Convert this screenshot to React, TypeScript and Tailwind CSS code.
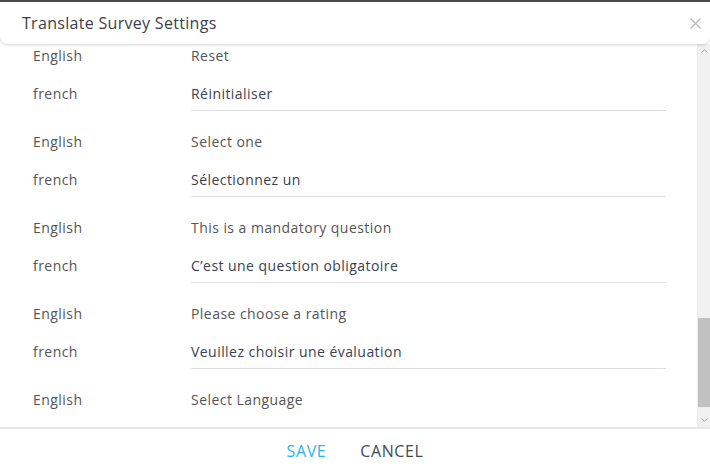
import React from "react";

const groups = [
  { en: "Reset", fr: "Réinitialiser" },
  { en: "Select one", fr: "Sélectionnez un" },
  { en: "This is a mandatory question", fr: "C’est une question obligatoire" },
  { en: "Please choose a rating", fr: "Veuillez choisir une évaluation" },
  { en: "Select Language", fr: null as string | null },
];

export default function App() {
  return (
    <div
      className="w-[710px] h-[472px] bg-white flex flex-col overflow-hidden relative"
      style={{ fontFamily: "'Open Sans', sans-serif" }}
    >
      <div className="h-[2px] bg-[#4a4a4a] shrink-0" />
      <div className="relative z-10 h-[42px] shrink-0 bg-white rounded-b-[8px] shadow-[0_1px_3px_rgba(0,0,0,0.18)] flex items-center justify-between pl-[22px] pr-[9px]">
        <span className="text-[16px] tracking-[0.3px] text-[#3d4049]">Translate Survey Settings</span>
        <svg width="11" height="11" viewBox="0 0 11 11">
          <path d="M0.5 0.5 L10.5 10.5 M10.5 0.5 L0.5 10.5" stroke="#b8b8b8" strokeWidth="1.1" />
        </svg>
      </div>
      <div className="flex-1 flex min-h-0">
        <div className="flex-1 overflow-hidden pl-[33px] pr-[31px]">
          {groups.map((g, i) => (
            <div key={i} className="mb-[19px]">
              <div className="h-[23px] flex items-center text-[14px] tracking-[0.45px] text-[#555]">
                <span className="w-[158px] shrink-0">English</span>
                <span>{g.en}</span>
              </div>
              {g.fr !== null && (
                <div className="flex text-[14px] tracking-[0.45px]">
                  <span className="w-[158px] shrink-0 pt-[18px] leading-[18px] text-[#555]">french</span>
                  <div className="flex-1 pt-[18px] pb-[7px] leading-[18px] text-[#3a3f51] border-b border-[#dcdee3]">
                    {g.fr}
                  </div>
                </div>
              )}
            </div>
          ))}
        </div>
        <div className="w-[13px] shrink-0 bg-[#f1f1f1] flex flex-col border-l border-[#ececec]">
          <div className="h-[14px] flex items-center justify-center">
            <svg width="7" height="4" viewBox="0 0 7 4"><path d="M0.5 3.5 L3.5 0.8 L6.5 3.5" fill="none" stroke="#a3a3a3" strokeWidth="1" /></svg>
          </div>
          <div className="flex-1 flex flex-col">
            <div className="h-[260px]" />
            <div className="h-[89px] bg-[#c1c1c1]" />
          </div>
          <div className="h-[14px] flex items-center justify-center">
            <svg width="7" height="4" viewBox="0 0 7 4"><path d="M0.5 0.5 L3.5 3.2 L6.5 0.5" fill="none" stroke="#a3a3a3" strokeWidth="1" /></svg>
          </div>
        </div>
      </div>
      <div className="h-[45px] shrink-0 border-t-2 border-[#e8e8e8] flex items-center justify-center gap-[34px] text-[16px] tracking-[0.6px]">
        <span className="text-[#2bb5ee]">SAVE</span>
        <span className="text-[#444a55]">CANCEL</span>
      </div>
    </div>
  );
}
